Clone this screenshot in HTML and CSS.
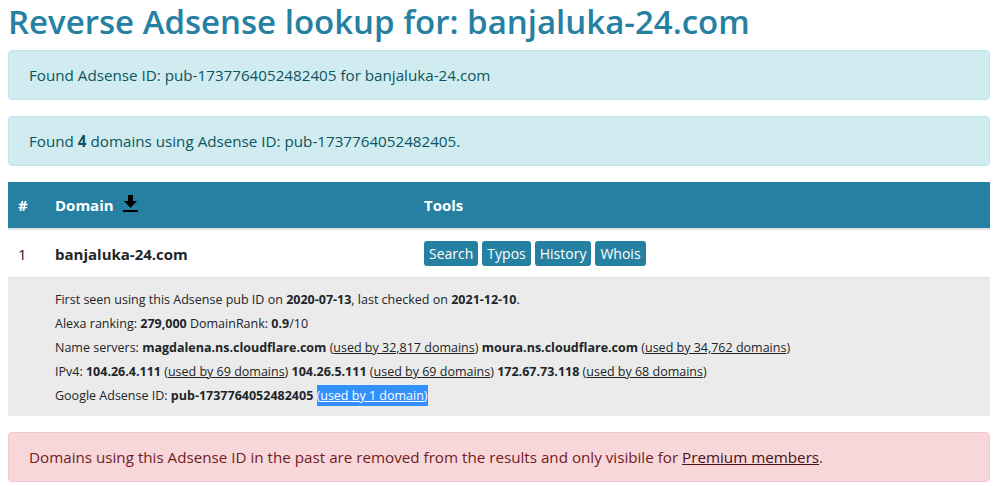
FILE: index.html
```html
<!DOCTYPE html>
<html lang="en">
<head>
<meta charset="UTF-8">
<title>Reverse Adsense lookup for: banjaluka-24.com</title>
<link rel="stylesheet" href="styles.css">
</head>
<body>
<div class="container">
  <h1>Reverse Adsense lookup for: banjaluka-24.com</h1>

  <div class="alert alert-info">Found Adsense ID: pub-1737764052482405 for banjaluka-24.com</div>
  <div class="alert alert-info">Found <b>4</b> domains using Adsense ID: pub-1737764052482405.</div>

  <table class="results">
    <thead>
      <tr>
        <th class="col-num">#</th>
        <th class="col-domain">Domain
          <svg class="dl-icon" width="15" height="17" viewBox="0 0 15 17"><path d="M5 0h5v6h4l-6.5 7L1 6h4z" fill="#000"/><rect x="0" y="15" width="15" height="2" fill="#000"/></svg>
        </th>
        <th>Tools</th>
      </tr>
    </thead>
    <tbody>
      <tr class="main-row">
        <td class="col-num">1</td>
        <td class="col-domain"><b>banjaluka-24.com</b></td>
        <td>
          <div class="tools">
            <a class="btn" href="#">Search</a>
            <a class="btn" href="#">Typos</a>
            <a class="btn" href="#">History</a>
            <a class="btn" href="#">Whois</a>
          </div>
        </td>
      </tr>
      <tr class="detail-row">
        <td></td>
        <td colspan="2">
          <div class="line">First seen using this Adsense pub ID on <b>2020-07-13</b>, last checked on <b>2021-12-10</b>.</div>
          <div class="line">Alexa ranking: <b>279,000</b> DomainRank: <b>0.9</b>/10</div>
          <div class="line">Name servers: <b>magdalena.ns.cloudflare.com</b> (<a href="#">used by 32,817 domains</a>) <b>moura.ns.cloudflare.com</b> (<a href="#">used by 34,762 domains</a>)</div>
          <div class="line">IPv4: <b>104.26.4.111</b> (<a href="#">used by 69 domains</a>) <b>104.26.5.111</b> (<a href="#">used by 69 domains</a>) <b>172.67.73.118</b> (<a href="#">used by 68 domains</a>)</div>
          <div class="line">Google Adsense ID: <b>pub-1737764052482405</b> <span class="selected">(<a href="#">used by 1 domain</a>)</span></div>
        </td>
      </tr>
    </tbody>
  </table>

  <div class="alert alert-danger">Domains using this Adsense ID in the past are removed from the results and only visibile for <a href="#">Premium members</a>.</div>
</div>
</body>
</html>
```

FILE: styles.css
```css
body {
  margin: 0;
  font-family: "Open Sans", "Noto Sans", sans-serif;
  color: #212529;
  background: #fff;
}
.container {
  width: 982px;
  margin-left: 8px;
}
h1 {
  margin: 0 0 6px;
  font-size: 33px;
  line-height: 44px;
  font-weight: 600;
  color: #2680a1;
}
.alert {
  padding: 12px 20px;
  margin-bottom: 16px;
  border: 1px solid transparent;
  border-radius: 4px;
  font-size: 15.2px;
  line-height: 24px;
}
.alert-info {
  color: #0c5460;
  background-color: #d1ecf1;
  border-color: #bee5eb;
}
.alert-danger {
  color: #721c24;
  background-color: #f8d7da;
  border-color: #f5c6cb;
}
.alert-danger a {
  color: #491217;
}
.results {
  width: 100%;
  border-collapse: collapse;
  margin-bottom: 16px;
}
.results th {
  background: #2680a1;
  color: #fff;
  text-align: left;
  font-size: 15px;
  font-weight: bold;
  padding: 11px 10px;
  border-bottom: 2px solid #dee2e6;
  line-height: 24px;
}
.col-num {
  width: 17px;
}
.col-domain {
  width: 349px;
}
.dl-icon {
  margin-left: 5px;
  vertical-align: -1px;
}
.main-row td {
  padding: 11px 10px;
  font-size: 15px;
  line-height: 24px;
  border-bottom: 1px solid #dee2e6;
}
.tools {
  display: flex;
  gap: 4px;
}
.btn {
  display: inline-block;
  background: #2680a1;
  color: #fff;
  font-size: 14px;
  line-height: 19px;
  padding: 3px 5px;
  border-radius: 3px;
  text-decoration: none;
}
.detail-row td {
  background: #ebebeb;
  padding: 10px 10px 8px;
  font-size: 12.5px;
}
.detail-row .line {
  line-height: 24px;
}
.detail-row a {
  color: #212529;
}
.selected {
  background: #3390ff;
  color: #fff;
  padding: 2px 0;
}
.selected a {
  color: #fff;
}
```
